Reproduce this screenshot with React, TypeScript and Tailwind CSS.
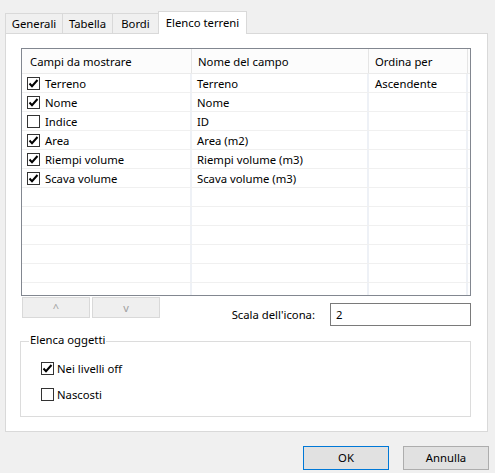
const rows = [
  { on: true, label: "Terreno", name: "Terreno", order: "Ascendente" },
  { on: true, label: "Nome", name: "Nome", order: "" },
  { on: false, label: "Indice", name: "ID", order: "" },
  { on: true, label: "Area", name: "Area (m2)", order: "" },
  { on: true, label: "Riempi volume", name: "Riempi volume (m3)", order: "" },
  { on: true, label: "Scava volume", name: "Scava volume (m3)", order: "" },
];

const Check = ({ on }: { on: boolean }) => (
  <span className="w-[13px] h-[13px] border border-[#333333] bg-white flex items-center justify-center shrink-0">
    {on && (
      <svg width="11" height="11" viewBox="0 0 11 11">
        <path d="M1.5 5.5 L4 8.2 L9.5 2" fill="none" stroke="#000" strokeWidth="2" />
      </svg>
    )}
  </span>
);

const Tab = ({ label, w }: { label: string; w: string }) => (
  <div className={`${w} h-[20px] border border-b-0 border-[#d9d9d9] -ml-px first:ml-0 bg-[#f0f0f0] flex items-center justify-center pt-px`}>
    {label}
  </div>
);

export default function App() {
  const empty = Array.from({ length: 6 });
  return (
    <div
      className="w-[495px] h-[473px] bg-[#f0f0f0] text-[11.3px] text-black leading-none overflow-hidden"
      style={{ fontFamily: '"Segoe UI", "Noto Sans", sans-serif' }}
    >
      <div className="flex items-end pl-[5px] pt-[10px] h-[33px]">
        <Tab label="Generali" w="w-[58px]" />
        <Tab label="Tabella" w="w-[51px]" />
        <Tab label="Bordi" w="w-[47px]" />
        <div className="w-[89px] h-[23px] -ml-px border border-b-0 border-[#d9d9d9] bg-white flex items-center justify-center pb-px relative z-10 -mb-px">
          Elenco terreni
        </div>
      </div>

      <div className="ml-[5px] w-[483px] h-[399px] border border-[#d9d9d9] bg-white pt-[14px] pl-[15px]">
        <div className="w-[450px] h-[248px] border border-[#828790] overflow-hidden">
          <div className="flex h-[25px] bg-[#fcfcfc] border-b border-[#ebebeb]">
            <div className="w-[170px] border-r border-[#e5e5e5] pl-[8px] flex items-center pt-px">Campi da mostrare</div>
            <div className="w-[177px] border-r border-[#e5e5e5] pl-[6px] flex items-center pt-px">Nome del campo</div>
            <div className="w-[99px] border-r border-[#e5e5e5] pl-[6px] flex items-center pt-px">Ordina per</div>
          </div>
          {rows.map((r) => (
            <div key={r.label} className="flex h-[19px] border-b border-[#f0f0f0]">
              <div className="w-[170px] border-r-2 border-[#eef1f6] pl-[5px] flex items-center gap-[5px]">
                <Check on={r.on} />
                <span className="pt-px">{r.label}</span>
              </div>
              <div className="w-[177px] border-r-2 border-[#eef1f6] pl-[5px] flex items-center pt-px">{r.name}</div>
              <div className="w-[99px] border-r-2 border-[#eef1f6] pl-[6px] flex items-center pt-px">{r.order}</div>
            </div>
          ))}
          {empty.map((_, i) => (
            <div key={i} className="flex h-[19px] border-b border-[#f0f0f0]">
              <div className="w-[170px] border-r-2 border-[#eef1f6]" />
              <div className="w-[177px] border-r-2 border-[#eef1f6]" />
              <div className="w-[99px] border-r-2 border-[#eef1f6]" />
            </div>
          ))}
          <div className="flex h-[19px]">
            <div className="w-[170px] border-r-2 border-[#eef1f6]" />
            <div className="w-[177px] border-r-2 border-[#eef1f6]" />
            <div className="w-[99px] border-r-2 border-[#eef1f6]" />
          </div>
        </div>

        <div className="flex items-start mt-[1px] w-[450px]">
          <div className="w-[68px] h-[21px] border border-[#d9d9d9] bg-[#efefef] text-[#a0a0a0] flex items-center justify-center ml-px text-[11px]">^</div>
          <div className="w-[68px] h-[21px] border border-[#d9d9d9] bg-[#efefef] text-[#a0a0a0] flex items-center justify-center ml-[2px] text-[11px]">v</div>
          <div className="flex-1 flex items-center justify-end mt-[6px]">
            <span className="mr-[15px] mt-px">Scala dell'icona:</span>
            <div className="w-[141px] h-[23px] border border-[#7a7a7a] pl-[5px] flex items-center">2</div>
          </div>
        </div>

        <div className="relative mt-[15px] w-[451px] h-[76px] border border-[#dcdcdc] -ml-px">
          <span className="absolute -top-[8px] left-[8px] bg-white px-px">Elenca oggetti</span>
          <div className="pt-[20px] pl-[20px] flex flex-col gap-[13px]">
            <label className="flex items-center gap-[3px]">
              <Check on={true} />
              <span className="pt-px">Nei livelli off</span>
            </label>
            <label className="flex items-center gap-[3px]">
              <Check on={false} />
              <span className="pt-px">Nascosti</span>
            </label>
          </div>
        </div>
      </div>

      <div className="flex justify-end gap-[14px] pr-[6px] mt-[14px]">
        <button className="w-[86px] h-[24px] border border-[#0078d7] bg-[#e1e1e1] flex items-center justify-center">OK</button>
        <button className="w-[86px] h-[24px] border border-[#adadad] bg-[#e1e1e1] flex items-center justify-center">Annulla</button>
      </div>
    </div>
  );
}
